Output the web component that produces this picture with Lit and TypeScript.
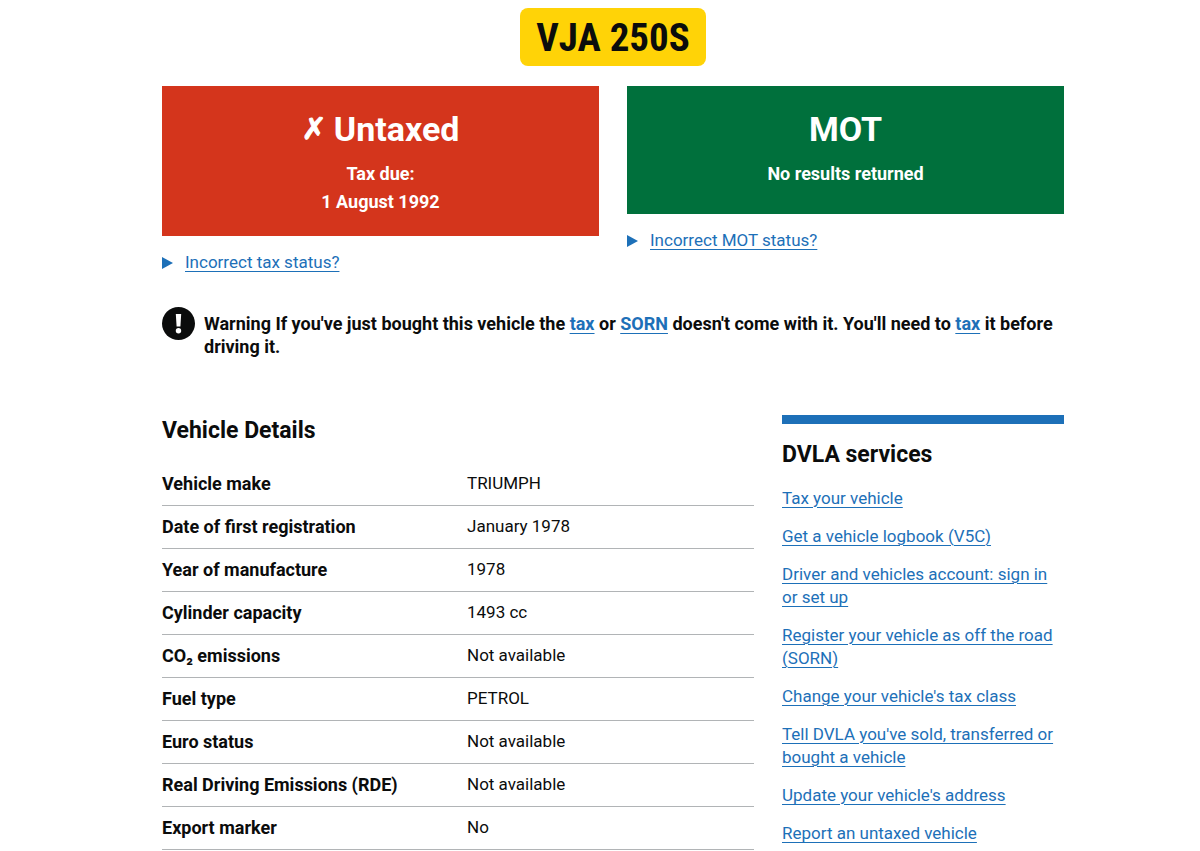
import { LitElement, html, css } from "lit";
import { customElement } from "lit/decorators.js";

const details: [string, string][] = [
  ["Vehicle make", "TRIUMPH"],
  ["Date of first registration", "January 1978"],
  ["Year of manufacture", "1978"],
  ["Cylinder capacity", "1493 cc"],
  ["CO₂ emissions", "Not available"],
  ["Fuel type", "PETROL"],
  ["Euro status", "Not available"],
  ["Real Driving Emissions (RDE)", "Not available"],
  ["Export marker", "No"],
];

const services = [
  "Tax your vehicle",
  "Get a vehicle logbook (V5C)",
  "Driver and vehicles account: sign in or set up",
  "Register your vehicle as off the road (SORN)",
  "Change your vehicle's tax class",
  "Tell DVLA you've sold, transferred or bought a vehicle",
  "Update your vehicle's address",
  "Report an untaxed vehicle",
];

@customElement("app-root")
export class AppRoot extends LitElement {
  static styles = css`
    :host {
      display: block;
      padding: 8px 0 0 26px;
      background: #fff;
      color: #0b0c0c;
      font-family: Roboto, "Noto Sans", sans-serif;
      font-size: 17px;
      line-height: 23px;
    }
    * { box-sizing: border-box; margin: 0; padding: 0; }
    .page { max-width: 902px; margin: 0 auto; }
    a, .summary-text {
      color: #1d70b8;
      text-decoration: underline;
      text-decoration-thickness: 1px;
      text-underline-offset: 3px;
    }
    .plate {
      width: fit-content;
      margin: 0 auto 20px;
      padding: 8px 16px 6px;
      border-radius: 8px;
      background: #ffd307;
      color: #0b0c0c;
      font-family: "Roboto Condensed", Roboto, sans-serif;
      font-size: 39px;
      line-height: 44px;
      font-weight: 700;
    }
    .statuses { display: grid; grid-template-columns: 1fr 1fr; gap: 28px; align-items: start; }
    .panel { padding: 22px 28px 20px; color: #fff; text-align: center; font-size: 18px; font-weight: 700; line-height: 28px; }
    .untaxed { background: #d4351c; }
    .mot { background: #00703c; padding-bottom: 26px; }
    .panel h2 { display: flex; justify-content: center; gap: 7px; font-size: 34px; line-height: 42px; margin-bottom: 10px; }
    .cross { font-family: "DejaVu Sans", sans-serif; font-size: 30px; -webkit-text-stroke: 1px #fff; }
    details { margin-top: 15px; }
    summary { display: flex; align-items: center; gap: 12px; list-style: none; cursor: pointer; }
    summary::-webkit-details-marker { display: none; }
    .arrow { width: 11px; height: 12px; fill: #1d70b8; }
    .warning { display: flex; gap: 9px; margin-top: 33px; font-size: 18px; font-weight: 700; }
    .warning svg { flex: none; width: 33px; height: 33px; }
    .warning p { padding-top: 5px; }
    .columns { display: grid; grid-template-columns: 592fr 282fr; gap: 28px; margin-top: 57px; align-items: start; }
    h3 { font-size: 23px; line-height: 28px; font-weight: 700; }
    .main h3 { margin: 2px 0 18px; }
    .row { display: grid; grid-template-columns: 305fr 287fr; padding: 9px 0 10px; border-bottom: 1px solid #b1b4b6; }
    dt { font-size: 18px; font-weight: 700; }
    .services { border-top: 9px solid #1d70b8; padding-top: 17px; }
    ul { list-style: none; display: grid; gap: 15px; margin-top: 18px; }
  `;

  render() {
    return html`
      <main class="page">
        <h1 class="plate">VJA 250S</h1>
        <div class="statuses">
          <section>
            <div class="panel untaxed">
              <h2><span class="cross">✗</span> <span>Untaxed</span></h2>
              <p>Tax due:<br />1 August 1992</p>
            </div>
            <details><summary>${this.arrow()}<span class="summary-text">Incorrect tax status?</span></summary></details>
          </section>
          <section>
            <div class="panel mot">
              <h2>MOT</h2>
              <p>No results returned</p>
            </div>
            <details><summary>${this.arrow()}<span class="summary-text">Incorrect MOT status?</span></summary></details>
          </section>
        </div>
        <div class="warning">
          <svg viewBox="0 0 33 33" aria-hidden="true">
            <circle cx="16.5" cy="16.5" r="16.5" fill="#0b0c0c" />
            <path d="M13.8 7h5.4l-.8 12.5h-3.8z" fill="#fff" />
            <circle cx="16.5" cy="23.7" r="2.7" fill="#fff" />
          </svg>
          <p>Warning If you've just bought this vehicle the <a href="#tax">tax</a> or <a href="#sorn">SORN</a> doesn't come with it. You'll need to <a href="#tax">tax</a> it before driving it.</p>
        </div>
        <div class="columns">
          <section class="main">
            <h3>Vehicle Details</h3>
            <dl>${details.map(([k, v]) => html`<div class="row"><dt>${k}</dt><dd>${v}</dd></div>`)}</dl>
          </section>
          <aside class="services">
            <h3>DVLA services</h3>
            <ul>${services.map((s) => html`<li><a href="#service">${s}</a></li>`)}</ul>
          </aside>
        </div>
      </main>
    `;
  }

  private arrow() {
    return html`<svg class="arrow" viewBox="0 0 11 12" aria-hidden="true"><path d="M0 0l11 6-11 6z" /></svg>`;
  }
}
